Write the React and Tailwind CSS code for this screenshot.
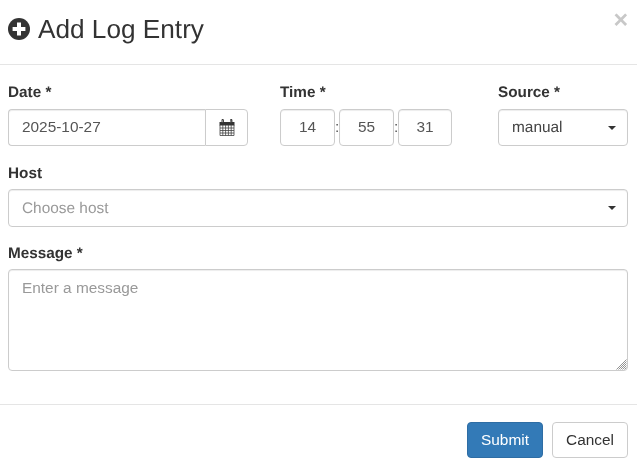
import React from 'react';

const field = 'border border-[#ccc] rounded-[4px] bg-white text-[15.4px] text-[#555] shadow-[inset_0_1px_1px_rgba(0,0,0,0.075)] outline-none';

const Label = ({ children }) => (
  <label className="block h-[18px] leading-[20px] text-[15.3px] font-bold text-[#333] mb-[7px]">{children}</label>
);

const Caret = () => (
  <span className="w-0 h-0 border-x-[4px] border-x-transparent border-t-[4px] border-t-[#333]" />
);

const TimeBox = ({ value, width }) => (
  <input
    readOnly
    value={value}
    className={`${field} ${width} h-[37px] pb-[1px] text-center`}
  />
);

const SelectBox = ({ children, muted, height }) => (
  <div className={`${field} ${height} flex items-center justify-between pl-[13px] pr-[11px]`}>
    <span className={muted ? 'text-[#999] pt-[1px]' : 'text-[#444]'}>{children}</span>
    <Caret />
  </div>
);

const PlusIcon = () => (
  <svg width="22" height="22" viewBox="0 0 22 22" className="shrink-0 mb-[1px]">
    <circle cx="11" cy="11" r="11" fill="#333" />
    <path d="M9 4.6h4V9h4.4v4H13v4.4H9V13H4.6V9H9z" fill="#fff" />
  </svg>
);

const CalendarIcon = () => (
  <svg width="16" height="17" viewBox="0 0 16 17" fill="#333" className="mb-[1px]">
    <path d="M0.5 3h15v3.5H0.5z" />
    <path d="M2.5 1.2a1.2 1.2 0 0 1 2.4 0V4H2.5zM11 1.2a1.2 1.2 0 0 1 2.4 0V4H11z" />
    <path d="M3.3 1.2v2M11.8 1.2v2" stroke="#fff" strokeWidth="0.6" fill="none" />
    <path
      d="M1 6v10.5h14V6M1 9h14M1 11.5h14M1 14h14M3.8 6v10.5M6.6 6v10.5M9.4 6v10.5M12.2 6v10.5"
      stroke="#444"
      strokeWidth="0.8"
      fill="none"
    />
  </svg>
);

// textarea grip, drawn larger than the browser's own
const ResizeGrip = () => (
  <svg width="11" height="11" viewBox="0 0 11 11" className="absolute right-[1px] bottom-[1px] pointer-events-none">
    <path d="M.5 10.5l10-10M2.5 10.5l8-8M4.5 10.5l6-6M6.5 10.5l4-4M8.5 10.5l2-2" stroke="#888" strokeWidth="0.9" fill="none" />
  </svg>
);

export default function App() {
  return (
    <div className="w-[637px] h-[468px] overflow-hidden [will-change:transform] [text-rendering:geometricPrecision] font-['Liberation_Sans',Arial,sans-serif] text-[#333]">
      <header className="relative h-[65px] border-b border-[#e5e5e5] pl-[8px] flex items-center">
        <div className="flex items-center gap-[8px] -mt-[6px]">
          <PlusIcon />
          <h4 className="text-[26.2px] leading-[30px] text-[#333]">Add Log Entry</h4>
        </div>
        <span className="absolute right-[9px] top-[7px] text-[25px] leading-[26px] font-bold text-[#c8c8c8]">×</span>
      </header>

      <main className="h-[339px] pl-[8px] pr-[9px] pt-[18px]">
        <div className="flex">
          <div className="w-[240px]">
            <Label>Date *</Label>
            <div className="pt-[1px]">
              <div className="flex h-[37px]">
                <input
                  readOnly
                  value="2025-10-27"
                  className={`${field} w-[197px] pb-[1px] rounded-r-none border-r-0 pl-[13px]`}
                />
                <div className="flex-1 flex items-center justify-center border border-[#ccc] rounded-r-[4px] bg-white">
                  <CalendarIcon />
                </div>
              </div>
            </div>
          </div>
          <div className="ml-[32px] w-[172px]">
            <Label>Time *</Label>
            <div className="pt-[1px]">
              <div className="flex items-center text-[15.4px] text-[#555]">
                <TimeBox value="14" width="w-[55px]" />
                <span className="w-[4px] text-center leading-none">:</span>
                <TimeBox value="55" width="w-[55px]" />
                <span className="w-[4px] text-center leading-none">:</span>
                <TimeBox value="31" width="w-[54px]" />
              </div>
            </div>
          </div>
          <div className="ml-[46px] w-[130px]">
            <Label>Source *</Label>
            <div className="pt-[1px]">
              <SelectBox height="h-[37px]">manual</SelectBox>
            </div>
          </div>
        </div>

        <div className="mt-[18px]">
          <Label>Host</Label>
          <SelectBox muted height="h-[38px]">Choose host</SelectBox>
        </div>

        <div className="mt-[17px]">
          <Label>Message *</Label>
          <div className="relative">
            <textarea
              placeholder="Enter a message"
              className={`${field} block w-full h-[102px] px-[13px] py-[6px] resize-none placeholder:text-[#999]`}
            />
            <ResizeGrip />
          </div>
        </div>
      </main>

      <footer className="border-t border-[#e5e5e5] pt-[17px] pr-[9px] flex justify-end gap-[9px]">
        <button className="h-[36px] w-[76px] text-[15.4px] text-white bg-[#337ab7] border border-[#2e6da4] rounded-[4px]">Submit</button>
        <button className="h-[36px] w-[76px] text-[15.4px] text-[#333] bg-white border border-[#ccc] rounded-[4px]">Cancel</button>
      </footer>
    </div>
  );
}
